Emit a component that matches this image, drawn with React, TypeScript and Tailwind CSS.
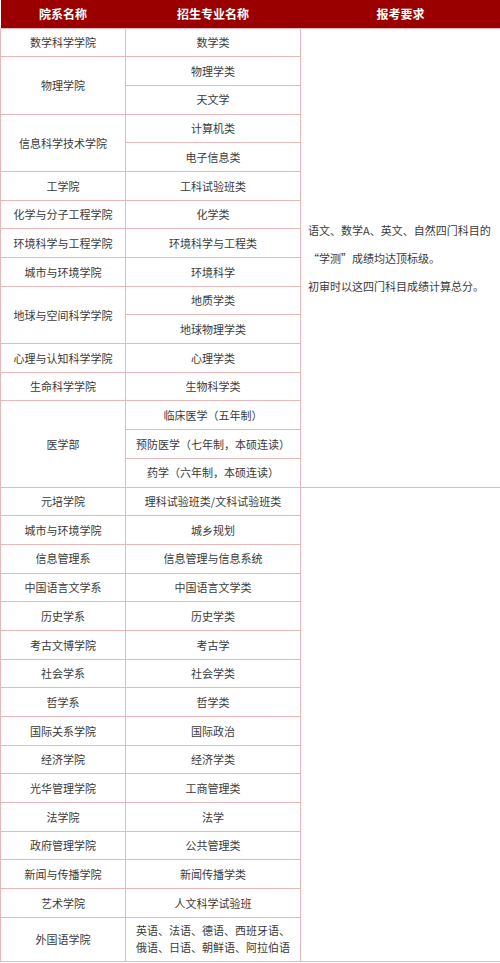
type Major = string | string[];

interface School {
  name: string;
  majors: Major[];
}

const groupA: School[] = [
  { name: '数学科学学院', majors: ['数学类'] },
  { name: '物理学院', majors: ['物理学类', '天文学'] },
  { name: '信息科学技术学院', majors: ['计算机类', '电子信息类'] },
  { name: '工学院', majors: ['工科试验班类'] },
  { name: '化学与分子工程学院', majors: ['化学类'] },
  { name: '环境科学与工程学院', majors: ['环境科学与工程类'] },
  { name: '城市与环境学院', majors: ['环境科学'] },
  { name: '地球与空间科学学院', majors: ['地质学类', '地球物理学类'] },
  { name: '心理与认知科学学院', majors: ['心理学类'] },
  { name: '生命科学学院', majors: ['生物科学类'] },
  {
    name: '医学部',
    majors: ['临床医学（五年制）', '预防医学（七年制，本硕连读）', '药学（六年制，本硕连读）'],
  },
];

const groupB: School[] = [
  { name: '元培学院', majors: ['理科试验班类/文科试验班类'] },
  { name: '城市与环境学院', majors: ['城乡规划'] },
  { name: '信息管理系', majors: ['信息管理与信息系统'] },
  { name: '中国语言文学系', majors: ['中国语言文学类'] },
  { name: '历史学系', majors: ['历史学类'] },
  { name: '考古文博学院', majors: ['考古学'] },
  { name: '社会学系', majors: ['社会学类'] },
  { name: '哲学系', majors: ['哲学类'] },
  { name: '国际关系学院', majors: ['国际政治'] },
  { name: '经济学院', majors: ['经济学类'] },
  { name: '光华管理学院', majors: ['工商管理类'] },
  { name: '法学院', majors: ['法学'] },
  { name: '政府管理学院', majors: ['公共管理类'] },
  { name: '新闻与传播学院', majors: ['新闻传播学类'] },
  { name: '艺术学院', majors: ['人文科学试验班'] },
  {
    name: '外国语学院',
    majors: [['英语、法语、德语、西班牙语、', '俄语、日语、朝鲜语、阿拉伯语']],
  },
];

const cell = 'border border-[#e6b6b8] text-center align-middle';

function countRows(list: School[]) {
  return list.reduce((n, s) => n + s.majors.length, 0);
}

function renderGroup(list: School[], requirement: React.ReactNode, key: string) {
  const total = countRows(list);
  const rows: React.ReactNode[] = [];
  let first = true;
  list.forEach((s, si) => {
    s.majors.forEach((m, mi) => {
      const multi = Array.isArray(m);
      rows.push(
        <tr key={`${key}-${si}-${mi}`} className={multi ? 'h-[44px]' : 'h-[28.7px]'}>
          {mi === 0 && (
            <td rowSpan={s.majors.length} className={cell}>
              {s.name}
            </td>
          )}
          <td className={`${cell} ${multi ? 'leading-[17px]' : ''}`}>
            {multi ? (
              <>
                {m[0]}
                <br />
                {m[1]}
              </>
            ) : (
              m
            )}
          </td>
          {first && (
            <td rowSpan={total} className={`${cell} text-left px-[7px]`}>
              {requirement}
            </td>
          )}
        </tr>,
      );
      first = false;
    });
  });
  return rows;
}

export default function App() {
  const requirement = (
    <div className="leading-[28px] whitespace-nowrap">
      <div>语文、数学A、英文、自然四门科目的</div>
      <div>“学测”成绩均达顶标级。</div>
      <div>初审时以这四门科目成绩计算总分。</div>
    </div>
  );

  return (
    <div
      className="w-[500px] bg-white text-[11px] text-[#3a3a3a]"
      style={{ fontFamily: '"Noto Sans CJK SC", "Noto Sans", sans-serif' }}
    >
      <table className="w-[500px] table-fixed border-collapse">
        <colgroup>
          <col className="w-[125px]" />
          <col className="w-[175px]" />
          <col className="w-[200px]" />
        </colgroup>
        <thead>
          <tr className="h-[28px] bg-[#9b0000] text-white text-[12px] font-bold">
            <th className="border-b border-[#e6b6b8] font-bold">院系名称</th>
            <th className="border-b border-[#e6b6b8] font-bold">招生专业名称</th>
            <th className="border-b border-[#e6b6b8] font-bold">报考要求</th>
          </tr>
        </thead>
        <tbody>
          {renderGroup(groupA, requirement, 'a')}
          {renderGroup(groupB, null, 'b')}
        </tbody>
      </table>
    </div>
  );
}
